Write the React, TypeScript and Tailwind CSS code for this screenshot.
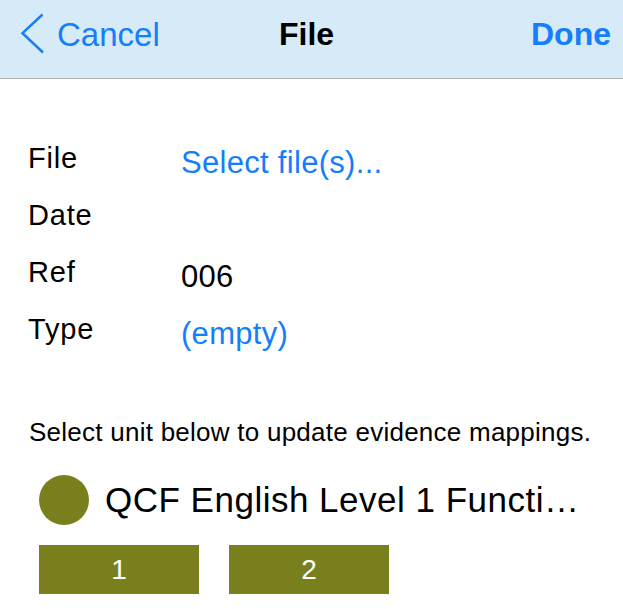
export default function App() {
  const rows: { label: string; value: string; color: string }[] = [
    { label: "File", value: "Select file(s)...", color: "text-[#157efb]" },
    { label: "Date", value: "", color: "text-black" },
    { label: "Ref", value: "006", color: "text-black" },
    { label: "Type", value: "(empty)", color: "text-[#157efb]" },
  ];
  return (
    <div className="w-[623px] h-[609px] bg-white overflow-hidden font-['Liberation_Sans',Arial,sans-serif]">
      <div className="h-[79px] bg-[#d7eaf7] border-b border-[#b2b2b2] grid grid-cols-[1fr_auto_1fr] items-center pb-[10px]">
        <div className="flex items-center pl-[20px]">
          <svg width="25" height="43" viewBox="0 0 25 43" fill="none">
            <path d="M22.5 1.5 L2.5 20.2 L23 39.5" stroke="#157efb" strokeWidth="2.5" />
          </svg>
          <span className="ml-[12px] text-[33px] leading-none text-[#157efb]">Cancel</span>
        </div>
        <div className="pr-[10px] text-[32px] font-bold leading-none text-black">File</div>
        <div className="flex justify-end pr-[12px]">
          <span className="text-[32px] font-bold leading-none text-[#157efb]">Done</span>
        </div>
      </div>

      <div className="mt-[51px] pl-[28px] flex flex-col">
        {rows.map((r) => (
          <div key={r.label} className="flex h-[57px]">
            <div className="w-[153px] text-[29px] leading-[57px] tracking-[0.8px] text-black">{r.label}</div>
            <div className={`mt-[4px] text-[31px] leading-[57px] tracking-[0.3px] ${r.color}`}>{r.value}</div>
          </div>
        ))}
      </div>

      <div className="mt-[59px] pl-[29px] text-[26px] leading-[30px] tracking-[0.25px] text-black">
        Select unit below to update evidence mappings.
      </div>

      <div className="mt-[28px] h-[50px] pl-[39px] pr-[38px] flex items-center">
        <div className="w-[50px] h-[50px] rounded-full bg-[#7a7f1e] shrink-0" />
        <div className="ml-[16px] flex-1 min-w-0 truncate text-[35px] tracking-[0.5px] text-black">
          QCF English Level 1 Functional Skills
        </div>
      </div>

      <div className="mt-[20px] pl-[39px] flex gap-[30px]">
        <div className="w-[160px] h-[49px] bg-[#7a7f1e] flex items-center justify-center text-white text-[28px]">1</div>
        <div className="w-[160px] h-[49px] bg-[#7a7f1e] flex items-center justify-center text-white text-[28px]">2</div>
      </div>
    </div>
  );
}
